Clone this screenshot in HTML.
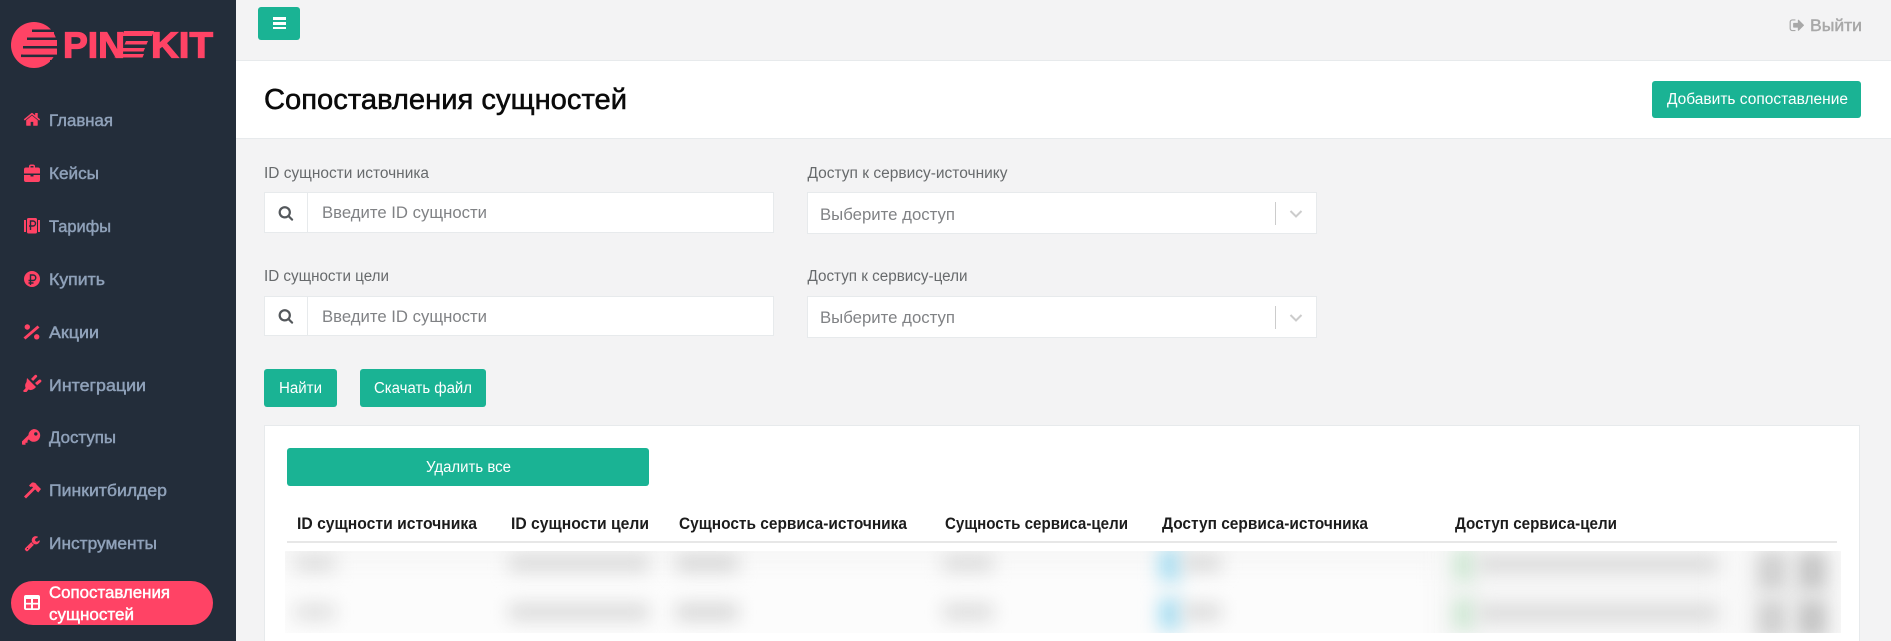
<!DOCTYPE html>
<html lang="ru"><head><meta charset="utf-8"><title>Сопоставления сущностей</title>
<style>
*{box-sizing:border-box}
html,body{margin:0;padding:0;width:1891px;height:641px;overflow:hidden;background:#f3f3f4}
div{position:absolute}
.btn{background:#1ab394;border-radius:3px}
.in{background:#fff;border:1px solid #e7eaec}
svg.t{position:absolute;left:0;top:0}
text{font-family:"Liberation Sans",sans-serif}
.nav{font-size:16.5px;fill:#8fa1b9;stroke:#8fa1b9;stroke-width:.45px}
.lab{font-size:15.5px;fill:#676a6c}
.ph{font-size:16.5px;fill:#808285}
.bt{font-size:15.5px;fill:#fff}
.th{font-size:16.5px;fill:#1c1c1c;font-weight:bold}
#blur{left:285px;top:551px;width:1556px;height:82px;overflow:hidden;background:#fcfcfc}
#blur div{filter:blur(9px)}
</style></head><body>
<div style="left:0;top:0;width:236px;height:641px;background:#232d3a"></div>
<div style="left:236px;top:60px;width:1655px;height:79px;background:#fff;border-top:1px solid #e7eaec;border-bottom:1px solid #e7eaec"></div>
<div class="btn" style="left:258px;top:7px;width:42px;height:33px"></div>
<div style="left:273px;top:17px;width:13px;height:2.6px;background:#fff"></div>
<div style="left:273px;top:22px;width:13px;height:2.6px;background:#fff"></div>
<div style="left:273px;top:26.500px;width:13px;height:2.6px;background:#fff"></div>
<div class="btn" style="left:1652px;top:81px;width:209px;height:37px"></div>
<div class="in" style="left:264px;top:192px;width:510px;height:41px"></div>
<div style="left:307px;top:192px;width:1px;height:41px;background:#e7eaec"></div>
<div class="in" style="left:264px;top:296px;width:510px;height:40px"></div>
<div style="left:307px;top:296px;width:1px;height:40px;background:#e7eaec"></div>
<div class="in" style="left:807px;top:192px;width:510px;height:42px"></div>
<div class="in" style="left:807px;top:296px;width:510px;height:42px"></div>
<div style="left:1275px;top:202px;width:1px;height:23px;background:#ccc"></div>
<div style="left:1275px;top:306px;width:1px;height:23px;background:#ccc"></div>
<div class="btn" style="left:264px;top:369px;width:73px;height:38px"></div>
<div class="btn" style="left:360px;top:369px;width:126px;height:38px"></div>
<div style="left:264px;top:425px;width:1596px;height:216px;background:#fff;border:1px solid #e7eaec;border-bottom:0"></div>
<div class="btn" style="left:287px;top:448px;width:362px;height:38px"></div>
<div style="left:287px;top:541px;width:1550px;height:2px;background:#e7e7e7"></div>
<div id="blur">
<div style="left:-25px;top:-20px;width:1610px;height:36px;background:#f7f7f7"></div>
<div style="left:1150px;top:-20px;width:440px;height:120px;background:#f7f7f7"></div>
<div style="left:1425px;top:-20px;width:160px;height:120px;background:#f8f8f8"></div>
<div style="left:10px;top:4px;width:40px;height:16px;background:#dcdcdc"></div>
<div style="left:10px;top:53px;width:40px;height:16px;background:#dedede"></div>
<div style="left:224px;top:4px;width:140px;height:16px;background:#d8d8d8"></div>
<div style="left:224px;top:53px;width:140px;height:16px;background:#d8d8d8"></div>
<div style="left:391px;top:4px;width:62px;height:16px;background:#d4d4d4"></div>
<div style="left:391px;top:53px;width:62px;height:16px;background:#d4d4d4"></div>
<div style="left:658px;top:4px;width:50px;height:16px;background:#dadada"></div>
<div style="left:658px;top:53px;width:50px;height:16px;background:#dadada"></div>
<div style="left:874px;top:-2px;width:22px;height:32px;background:#a8def2"></div>
<div style="left:874px;top:47px;width:22px;height:32px;background:#a8def2"></div>
<div style="left:898px;top:4px;width:38px;height:16px;background:#d8d8d8"></div>
<div style="left:898px;top:53px;width:38px;height:16px;background:#d8d8d8"></div>
<div style="left:1168px;top:-2px;width:22px;height:32px;background:#cfe8d4"></div>
<div style="left:1168px;top:47px;width:22px;height:32px;background:#cfe8d4"></div>
<div style="left:1193px;top:5px;width:240px;height:16px;background:#d8d8d8"></div>
<div style="left:1193px;top:54px;width:240px;height:16px;background:#d8d8d8"></div>
<div style="left:1472px;top:0;width:30px;height:40px;background:#cfcfcf"></div>
<div style="left:1512px;top:0;width:30px;height:40px;background:#c6c6c6"></div>
<div style="left:1472px;top:48px;width:30px;height:40px;background:#cfcfcf"></div>
<div style="left:1512px;top:48px;width:30px;height:40px;background:#c4c4c4"></div>
</div>
<div style="left:11px;top:581px;width:202px;height:44px;border-radius:22px;background:#ff4365"></div>

<svg class="t" width="1891" height="641" viewBox="0 0 1891 641" xmlns="http://www.w3.org/2000/svg">
<!-- logo -->
<circle cx="34" cy="45" r="23" fill="#ff4365"/>
<g fill="#232d3a">
<rect x="50" y="20" width="12" height="8"/><rect x="32" y="29.500" width="30" height="2.600"/><rect x="27" y="37.500" width="35" height="2.600"/><rect x="23" y="46" width="39" height="2.600"/><rect x="21" y="54.500" width="41" height="2.600"/><rect x="50" y="60" width="12" height="10"/>
</g>
<g fill="#ff4365"><rect x="32" y="32" width="22" height="5.500"/><rect x="27" y="40" width="30" height="6"/><rect x="23" y="48.600" width="34" height="6"/></g>
<text x="63" y="57.500" font-size="36" font-weight="bold" fill="#ff4365" stroke="#ff4365" stroke-width="1.200" textLength="62" lengthAdjust="spacingAndGlyphs">PIN</text>
<g fill="#ff4365"><path d="M124 31h30l-2 5h-30zM126 41h22l-1.500 3.500h-22zM123 48h22l-1.500 3.500h-22zM116 54h28l-1.500 3.500h-28z"/></g>
<text x="151" y="57.500" font-size="36" font-weight="bold" fill="#ff4365" stroke="#ff4365" stroke-width="1.200" textLength="62" lengthAdjust="spacingAndGlyphs">KIT</text>

<!-- nav icons -->
<g fill="#ff4365">
<path transform="translate(23,110.400) scale(.01)" d="M1472 992v480q0 26-19 45t-45 19h-384v-384h-256v384h-384q-26 0-45-19t-19-45v-480q0-1 .5-3t.5-3l575-474 575 474q1 2 1 6zm223-69l-62 74q-8 9-21 11h-3q-13 0-21-7l-692-577-692 577q-12 8-24 7-13-2-21-11l-62-74q-8-10-7-23.500t11-21.500l719-599q32-26 76-26t76 26l244 204v-195q0-14 9-23t23-9h192q14 0 23 9t9 23v408l219 182q10 8 11 21.500t-7 23.500z"/>
<path fill-rule="evenodd" d="M24 169.500q0-2 2-2h3v-1q0-2 2-2h2q2 0 2 2v1h3q2 0 2 2v4h-16zM30.500 166v1.500h3V166z"/>
<path d="M24 175h6.500v1.500h3V175H40v5q0 2-2 2H26q-2 0-2-2z"/>
<rect x="24" y="220" width="2" height="12"/><rect x="38" y="220" width="2" height="12"/>
<rect x="27" y="218" width="10" height="15.500" rx="1.500"/>
<circle cx="32" cy="279" r="8"/>
<circle cx="27.300" cy="327" r="2.700"/><circle cx="36.700" cy="336.800" r="2.700"/>
<path d="M37.500 325.500l2 2-14 12-2-2z"/>
<path d="M27 378l9 9-1.500 1.500q-3 2.500-6 1l-2 2.500h-2.500l-1-1 2.700-3q-1.500-3 .800-6zM31 379l3.600-3.800q1.100-1 2.100 0t0 2.100l-3.600 3.700zM35 383l4-3.200q1.100-.8 2 .2t0 2l-3.900 3.200z"/>
<path fill-rule="evenodd" d="M33.800 429a6.400 6.400 0 1 1-5 10.400l-1.300 1.300v2h-2v2h-3l-.5-.5v-2.800l6.400-6.300a6.400 6.400 0 0 1 5.400-6.100zM35.800 432.200a1.700 1.700 0 1 0 0 3.400 1.700 1.700 0 0 0 0-3.400z"/>
<path d="M34 482.500h-2l-3 3 1.500 1.500 1.500-.5 1 1-9 9 2 2 9-9 1 .5.500 1 1.800 1.500 2.700-3.500-4.500-4.500-.5-1z"/>
<path transform="translate(24,535) scale(.0092)" d="M448 1472q0-26-19-45t-45-19-45 19-19 45 19 45 45 19 45-19 19-45zm644-420l-682 682q-37 37-90 37-52 0-91-37l-106-108q-38-36-38-90 0-53 38-91l681-681q39 98 114.500 173.500t173.500 114.500zm634-435q0 39-23 106-47 134-164.500 217.500t-258.500 83.500q-185 0-316.500-131.500t-131.500-316.500 131.500-316.500 316.500-131.500q58 0 121.500 16.500t107.500 46.500q16 11 16 28t-16 28l-293 169v224l193 107q5-3 79-48.500t135.500-81 70.500-35.500q15 0 23.500 10t8.500 25z"/>
</g>
<g fill="none" stroke="#232d3a" stroke-width="1.400">
<path d="M30.500 230v-9h2.500a2.500 2.500 0 0 1 0 5h-4"/>
<path d="M30.500 285v-10h2.500a2.700 2.700 0 0 1 0 5.500h-4.500M28.500 283h5"/>
</g>
<rect x="24" y="595" width="16" height="15" rx="2" fill="#fff"/>
<g fill="#ff4365"><rect x="26" y="599" width="5" height="3.800"/><rect x="33" y="599" width="5" height="3.800"/><rect x="26" y="604.500" width="5" height="3.800"/><rect x="33" y="604.500" width="5" height="3.800"/></g>

<!-- nav text -->
<text class="nav" x="49" y="126" textLength="64" lengthAdjust="spacingAndGlyphs">Главная</text>
<text class="nav" x="49" y="179" textLength="50" lengthAdjust="spacingAndGlyphs">Кейсы</text>
<text class="nav" x="49" y="232" textLength="62" lengthAdjust="spacingAndGlyphs">Тарифы</text>
<text class="nav" x="49" y="285" textLength="56" lengthAdjust="spacingAndGlyphs">Купить</text>
<text class="nav" x="49" y="338" textLength="50" lengthAdjust="spacingAndGlyphs">Акции</text>
<text class="nav" x="49" y="391" textLength="97" lengthAdjust="spacingAndGlyphs">Интеграции</text>
<text class="nav" x="49" y="443" textLength="67" lengthAdjust="spacingAndGlyphs">Доступы</text>
<text class="nav" x="49" y="496" textLength="118" lengthAdjust="spacingAndGlyphs">Пинкитбилдер</text>
<text class="nav" x="49" y="549" textLength="108" lengthAdjust="spacingAndGlyphs">Инструменты</text>
<text class="nav" style="fill:#fff;stroke:#fff" x="49" y="598" textLength="121" lengthAdjust="spacingAndGlyphs">Сопоставления</text>
<text class="nav" style="fill:#fff;stroke:#fff" x="49" y="620" textLength="85" lengthAdjust="spacingAndGlyphs">сущностей</text>

<!-- top -->
<path fill="#a8a8a8" transform="translate(1789,17) scale(.0092)" d="M704 1440q0 4 1 20t.5 26.500-3 23.500-10 19.500-20.500 6.500h-320q-119 0-203.500-84.500t-84.500-203.500v-704q0-119 84.500-203.500t203.500-84.500h320q13 0 22.500 9.500t9.500 22.500q0 4 1 20t.5 26.500-3 23.500-10 19.500-20.500 6.500h-320q-66 0-113 47t-47 113v704q0 66 47 113t113 47h312l11.500 1 11.500 3 8 5.500 7 9 2 13.500zm928-544q0 26-19 45l-544 544q-19 19-45 19t-45-19-19-45v-288h-448q-26 0-45-19t-19-45v-384q0-26 19-45t45-19h448v-288q0-26 19-45t45-19 45 19l544 544q19 19 19 45z"/>
<text x="1810" y="31" font-size="16.5" fill="#a8a8a8" stroke="#a8a8a8" stroke-width=".45" textLength="52" lengthAdjust="spacingAndGlyphs">Выйти</text>
<text x="264" y="109" font-size="29" fill="#0a0a0a" stroke="#0a0a0a" stroke-width=".55" textLength="363" lengthAdjust="spacingAndGlyphs">Сопоставления сущностей</text>
<text class="bt" x="1667" y="104" textLength="181" lengthAdjust="spacingAndGlyphs">Добавить сопоставление</text>

<!-- form -->
<text class="lab" x="264" y="178" textLength="165" lengthAdjust="spacingAndGlyphs">ID сущности источника</text>
<text class="lab" x="264" y="281" textLength="125" lengthAdjust="spacingAndGlyphs">ID сущности цели</text>
<text class="lab" x="807.500" y="178" textLength="200" lengthAdjust="spacingAndGlyphs">Доступ к сервису-источнику</text>
<text class="lab" x="807.500" y="281" textLength="160" lengthAdjust="spacingAndGlyphs">Доступ к сервису-цели</text>
<text class="ph" x="322" y="218" textLength="165" lengthAdjust="spacingAndGlyphs">Введите ID сущности</text>
<text class="ph" x="322" y="322" textLength="165" lengthAdjust="spacingAndGlyphs">Введите ID сущности</text>
<text class="ph" x="820" y="220" textLength="135" lengthAdjust="spacingAndGlyphs">Выберите доступ</text>
<text class="ph" x="820" y="323" textLength="135" lengthAdjust="spacingAndGlyphs">Выберите доступ</text>
<path fill="#54585c" transform="translate(278,205) scale(.0088)" d="M1216 832q0-185-131.500-316.500t-316.500-131.500-316.500 131.500-131.500 316.500 131.500 316.500 316.500 131.500 316.500-131.500 131.500-316.500zm512 832q0 52-38 90t-90 38q-54 0-90-38l-343-342q-179 124-399 124-143 0-273.500-55.500t-225-150-150-225-55.500-273.500 55.500-273.500 150-225 225-150 273.500-55.500 273.500 55.500 225 150 150 225 55.500 273.500q0 220-124 399l343 343q37 37 37 90z"/>
<path fill="#54585c" transform="translate(278,308) scale(.0088)" d="M1216 832q0-185-131.500-316.500t-316.500-131.500-316.500 131.500-131.500 316.500 131.500 316.500 316.500 131.500 316.500-131.500 131.500-316.500zm512 832q0 52-38 90t-90 38q-54 0-90-38l-343-342q-179 124-399 124-143 0-273.500-55.500t-225-150-150-225-55.500-273.500 55.500-273.500 150-225 225-150 273.500-55.500 273.500 55.500 225 150 150 225 55.500 273.500q0 220-124 399l343 343q37 37 37 90z"/>
<path fill="none" stroke="#ccc" stroke-width="2" d="M1290.500 211l5.500 5.500 5.500-5.500M1290.500 315l5.500 5.500 5.500-5.500"/>
<text class="bt" x="279" y="393" textLength="43" lengthAdjust="spacingAndGlyphs">Найти</text>
<text class="bt" x="374" y="393" textLength="98" lengthAdjust="spacingAndGlyphs">Скачать файл</text>

<!-- table -->
<text class="bt" x="426" y="472" textLength="85" lengthAdjust="spacingAndGlyphs">Удалить все</text>
<text class="th" x="297" y="529" textLength="180" lengthAdjust="spacingAndGlyphs">ID сущности источника</text>
<text class="th" x="511" y="529" textLength="138" lengthAdjust="spacingAndGlyphs">ID сущности цели</text>
<text class="th" x="679" y="529" textLength="228" lengthAdjust="spacingAndGlyphs">Сущность сервиса-источника</text>
<text class="th" x="945" y="529" textLength="183" lengthAdjust="spacingAndGlyphs">Сущность сервиса-цели</text>
<text class="th" x="1162" y="529" textLength="206" lengthAdjust="spacingAndGlyphs">Доступ сервиса-источника</text>
<text class="th" x="1455" y="529" textLength="162" lengthAdjust="spacingAndGlyphs">Доступ сервиса-цели</text>
</svg>
</body></html>
